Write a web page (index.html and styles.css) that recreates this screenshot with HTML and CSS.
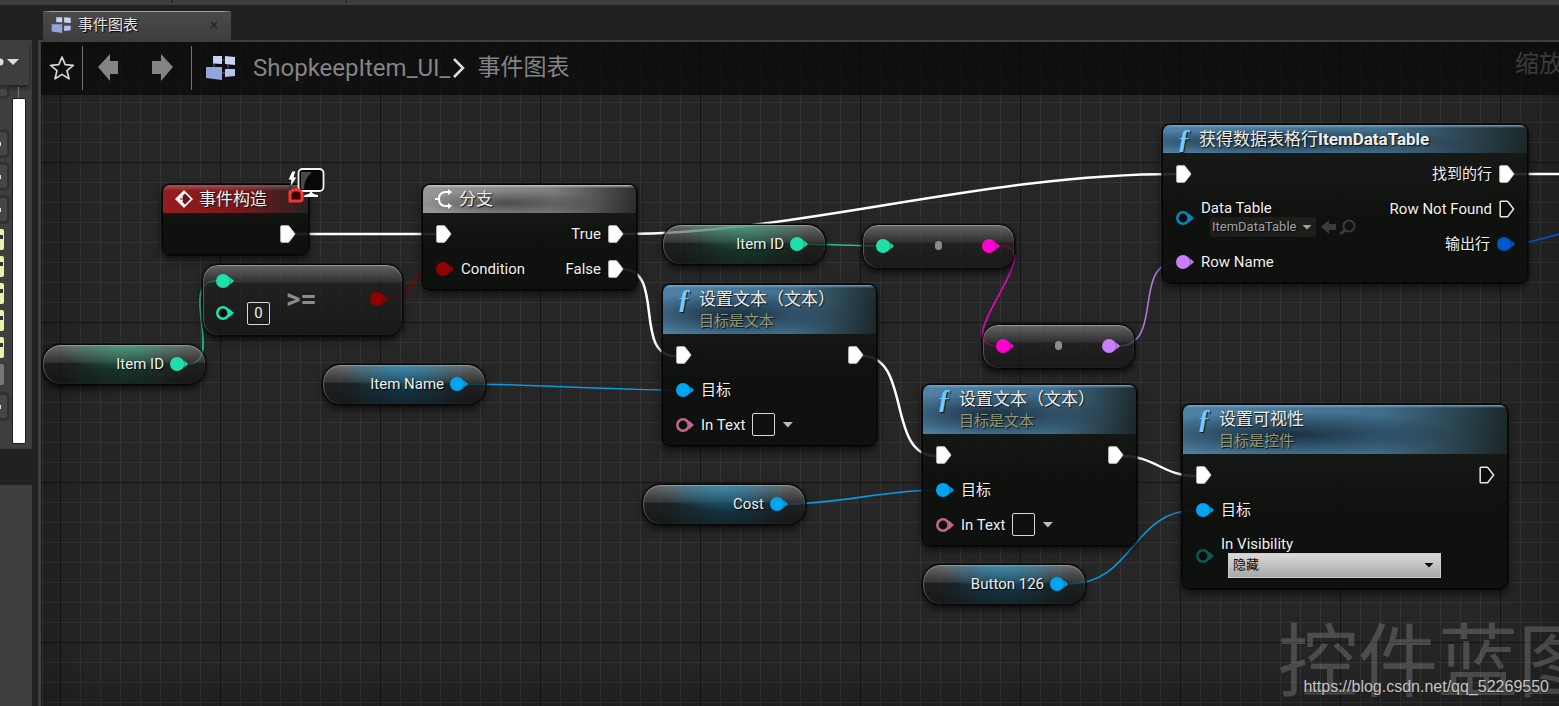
FILE: index.html
```html
<!DOCTYPE html>
<html lang="zh-CN">
<head>
<meta charset="utf-8">
<title>事件图表</title>
<link rel="stylesheet" href="styles.css">
</head>
<body>
<svg class="defs" aria-hidden="true">
  <symbol id="exec" viewBox="0 0 16 18"><path d="M.8 1.6Q.8.8 1.6.8H8Q8.800 .8 9.300 1.500L15 9L9.300 16.500Q8.800 17.200 8 17.200H1.600Q.8 17.200 .8 16.400Z" fill="#fff" stroke="#ddd" stroke-width="1"/></symbol>
  <symbol id="exec-open" viewBox="0 0 16 18"><path d="M1.200 2Q1.200 1.200 2 1.200H7.800Q8.500 1.200 9 1.800L14.600 9L9 16.200Q8.500 16.800 7.800 16.800H2Q1.200 16.800 1.200 16Z" fill="#0c0e0c" stroke="#e8e8e8" stroke-width="1.500"/></symbol>
  <symbol id="data" viewBox="0 0 18 14"><path d="M14.300 3.600L18 7L14.300 10.400Q15.800 7 14.300 3.600Z" fill="currentColor"/><path d="M12 2L17 7L12 12Z" fill="currentColor" opacity=".7"/><circle cx="7" cy="7" r="7" fill="currentColor"/></symbol>
  <symbol id="data-open" viewBox="0 0 18 14"><path d="M13 2.400L18 7L13 11.600Z" fill="currentColor"/><circle cx="7" cy="7" r="5.700" fill="#0a0d0b" stroke="currentColor" stroke-width="2.600"/></symbol>
  <symbol id="graph" viewBox="0 0 32 26">
    <path d="M9 8V16M23 8V16M14 5H23M14 18H22" stroke="#59617e" fill="none"/>
    <path d="M8 1H17V9L8 8.500ZM20 1L30 2V10L20 9Z" fill="#c9d2f3"/><path d="M1 12H17V25L1 23Z" fill="#94a5dc"/><path d="M20 14H30V21L20 22Z" fill="#b6c2ef"/>
  </symbol>
</svg>

<div class="topbar"><i></i><i></i></div>
<div class="shell">
  <aside class="side">
    <section class="details">
      <div class="details-head">
        <svg width="20" height="14" viewBox="0 0 20 14"><circle cx="0" cy="7" r="3.500" fill="#ddd"/><path d="M7 4H19L13 10Z" fill="#ddd"/></svg>
      </div>
      <div class="details-body">
        <div class="slots">
          <span class="slot cut"></span>
          <span class="slot dot first"></span><span class="slot dot"></span><span class="slot dot"></span>
          <span class="swatch"></span><span class="swatch"></span><span class="swatch"></span><span class="swatch"></span><span class="swatch"></span><span class="swatch off"></span>
          <span class="slot dot last"></span>
        </div>
        <div class="scroll"><div class="thumb"></div></div>
      </div>
    </section>
    <section class="lower"></section>
  </aside>

  <main class="editor">
    <div class="tabs">
      <div class="tab">
        <svg width="21" height="18"><use href="#graph"/></svg>
        <span>事件图表</span>
        <button class="close" aria-label="关闭"><svg width="8" height="8" viewBox="0 0 8 8"><path d="M1 1L7 7M7 1L1 7" stroke="#262626" stroke-width="1.500"/></svg></button>
      </div>
    </div>
    <div class="graph">
      <header class="crumbs">
        <button aria-label="收藏" class="star"><svg width="26" height="26" viewBox="0 0 26 26"><path d="M13 2L16.200 9.700L24.300 10.300L18 15.600L20 23.800L13 19.400L6 23.800L8 15.600L1.700 10.300L9.800 9.700Z" fill="none" stroke="#d6d6d6" stroke-width="1.700" stroke-linejoin="round"/></svg></button>
        <i class="rule"></i>
        <button aria-label="后退" class="nav"><svg width="22" height="30" viewBox="0 0 22 30"><path d="M0 14L12 1V8H20V21H12V28Z" fill="#848484"/></svg></button>
        <button aria-label="前进" class="nav"><svg width="22" height="30" viewBox="0 0 22 30"><path d="M22 14L10 1V8H1V21H10V28Z" fill="#848484"/></svg></button>
        <i class="rule"></i>
        <svg class="crumb-icon" width="32" height="26"><use href="#graph"/></svg>
        <a href="#">ShopkeepItem_UI_</a>
        <svg class="chevron" width="12" height="20" viewBox="0 0 12 20"><path d="M1 1L10 10L1 19" fill="none" stroke="#ddd" stroke-width="2.500"/></svg>
        <span class="here">事件图表</span>
        <span class="zoom">缩放-1</span>
      </header>

      <div class="canvas">
        <div class="watermark">控件蓝图</div>
        <svg class="wires" aria-hidden="true">
          <g transform="translate(-41 -42)" fill="none">
            <g stroke="#fff" stroke-width="2.500">
              <path d="M295 234H436"/><path d="M622 234C800 234 980 174 1176 174"/><path d="M622 269C666 269 632 356 676 356"/><path d="M862 356C912 356 886 456 936 456"/><path d="M1122 456C1155 456 1163 476 1196 476"/><path d="M1512 174H3000"/>
            </g>
            <g stroke="#1fc897" stroke-width="1.600"><path d="M187 364C226 364 177 281 216 281"/><path d="M805 244L876 246"/></g>
            <path d="M386 300C412 300 412 268 438 268" stroke="#8a0000" stroke-width="1.600"/>
            <path d="M1000 246C1052 246 944 346 998 346" stroke="#ee00bd" stroke-width="1.600"/>
            <path d="M1118 346C1166 346 1130 262 1178 262" stroke="#b873e8" stroke-width="1.600"/>
            <g stroke="#069be4" stroke-width="1.600"><path d="M467 384C530 384 610 390 676 390"/><path d="M787 504C840 504 885 490 936 490"/><path d="M1068 584C1135 584 1130 510 1197 510"/></g>
            <path d="M1512 243C1535 243 1545 237 1575 230" stroke="#0057cd" stroke-width="1.600"/>
          </g>
        </svg>

        <article class="node n-event">
          <h2 class="red"><svg width="20" height="20" viewBox="0 0 20 20"><path d="M10 1L19 10L10 19L1 10Z" fill="#f4f4f4"/><path d="M11 4.500L16.500 10L11 15.500L8.500 13L9 10.500H6V9.500H9L8.500 7Z" fill="#6b1414"/></svg>事件构造</h2>
          <div class="pins"><div></div><div class="outs"><div class="pin"><svg class="ex"><use href="#exec"/></svg></div></div></div>
          <svg class="badge" width="38" height="38" viewBox="0 0 38 38">
            <path d="M5 4H9L7 10H10L3 21L4 13H1Z" fill="#fff" stroke="#111" stroke-width=".8"/>
            <rect x="11.500" y="2" width="25" height="22" rx="4" fill="#080808" stroke="#f2f2f2" stroke-width="1.800"/>
            <path d="M14 5H25Q17 12 17 22H14Z" fill="#484848"/><path d="M18 28Q23 27 23 25H25Q25 27 31 28V30H16Z" fill="#fff"/>
            <path d="M4 25L6 23H12L15 26V33L14 34H3V25Z" fill="#310000" stroke="#f83535" stroke-width="3"/>
          </svg>
        </article>

        <article class="node n-branch">
          <h2 class="gray"><svg width="20" height="20" viewBox="0 0 20 20"><path d="M1 10H5M16 3H12Q5 3 5 10Q5 17 12 17H16" fill="none" stroke="#fff" stroke-width="2"/><path d="M14 0L18 3L14 6ZM14 14L18 17L14 20Z" fill="#fff"/></svg>分支</h2>
          <div class="pins">
            <div class="ins"><div class="pin"><svg class="ex"><use href="#exec"/></svg></div><div class="pin"><svg class="dp bool"><use href="#data"/></svg>Condition</div></div>
            <div class="outs"><div class="pin">True<svg class="ex"><use href="#exec"/></svg></div><div class="pin">False<svg class="ex"><use href="#exec"/></svg></div></div>
          </div>
        </article>

        <article class="node n-text1">
          <h2 class="blue tall"><b class="fn">ƒ</b><span>设置文本（文本）<small>目标是文本</small></span></h2>
          <div class="pins">
            <div class="ins"><div class="pin"><svg class="ex"><use href="#exec"/></svg></div><div class="pin"><svg class="dp obj"><use href="#data"/></svg>目标</div><div class="pin"><svg class="dp text"><use href="#data-open"/></svg><label for="text1">In Text</label><input id="text1" class="box"><i class="caret"></i></div></div>
            <div class="outs"><div class="pin"><svg class="ex"><use href="#exec"/></svg></div></div>
          </div>
        </article>

        <article class="node n-text2">
          <h2 class="blue tall"><b class="fn">ƒ</b><span>设置文本（文本）<small>目标是文本</small></span></h2>
          <div class="pins">
            <div class="ins"><div class="pin"><svg class="ex"><use href="#exec"/></svg></div><div class="pin"><svg class="dp obj"><use href="#data"/></svg>目标</div><div class="pin"><svg class="dp text"><use href="#data-open"/></svg><label for="text2">In Text</label><input id="text2" class="box"><i class="caret"></i></div></div>
            <div class="outs"><div class="pin"><svg class="ex"><use href="#exec"/></svg></div></div>
          </div>
        </article>

        <article class="node n-row">
          <h2 class="blue"><b class="fn">ƒ</b><span>获得数据表格行<b>ItemDataTable</b></span></h2>
          <div class="pins">
            <div class="ins">
              <div class="pin"><svg class="ex"><use href="#exec"/></svg></div>
              <div class="pin stacked"><svg class="dp obj2"><use href="#data-open"/></svg>
                <div class="field"><label for="table">Data Table</label>
                  <div class="asset"><span class="pick dark"><select id="table"><option>ItemDataTable</option></select></span>
                    <svg width="36" height="16" viewBox="0 0 36 16"><path d="M0 8L8 1V5H15V11H8V15Z" fill="#3c3c3c"/><circle cx="28" cy="7" r="5.500" fill="none" stroke="#3c3c3c" stroke-width="2"/><path d="M24 11L19.500 15" stroke="#3c3c3c" stroke-width="3"/></svg>
                  </div></div></div>
              <div class="pin"><svg class="dp name"><use href="#data"/></svg>Row Name</div>
            </div>
            <div class="outs"><div class="pin">找到的行<svg class="ex"><use href="#exec"/></svg></div><div class="pin">Row Not Found<svg class="ex"><use href="#exec-open"/></svg></div><div class="pin">输出行<svg class="dp struct"><use href="#data"/></svg></div></div>
          </div>
        </article>

        <article class="node n-vis">
          <h2 class="blue tall"><b class="fn">ƒ</b><span>设置可视性<small>目标是控件</small></span></h2>
          <div class="pins">
            <div class="ins">
              <div class="pin"><svg class="ex"><use href="#exec"/></svg></div><div class="pin"><svg class="dp obj"><use href="#data"/></svg>目标</div>
              <div class="pin stacked vis"><svg class="dp enum"><use href="#data-open"/></svg>
                <div class="field"><label for="vis">In Visibility</label><span class="pick light"><select id="vis"><option>隐藏</option></select></span></div></div>
            </div>
            <div class="outs"><div class="pin"><svg class="ex"><use href="#exec-open"/></svg></div></div>
          </div>
        </article>

        <div class="var int v-id1">Item ID<svg class="dp"><use href="#data"/></svg></div>
        <div class="var ref v-name">Item Name<svg class="dp"><use href="#data"/></svg></div>
        <div class="var int v-id2">Item ID<svg class="dp"><use href="#data"/></svg></div>
        <div class="var ref v-cost">Cost<svg class="dp"><use href="#data"/></svg></div>
        <div class="var ref v-button">Button 126<svg class="dp"><use href="#data"/></svg></div>

        <div class="compact c-int"><svg class="dp integer"><use href="#data"/></svg><i class="bullet"></i><svg class="dp string"><use href="#data"/></svg></div>
        <div class="compact c-name"><svg class="dp string"><use href="#data"/></svg><i class="bullet"></i><svg class="dp name"><use href="#data"/></svg></div>
        <div class="compact c-ge">
          <div class="operands"><svg class="dp integer"><use href="#data"/></svg><div class="operand"><svg class="dp integer"><use href="#data-open"/></svg><input class="box" value="0" aria-label="B"></div></div>
          <b class="op">&gt;=</b><svg class="dp bool"><use href="#data"/></svg>
        </div>
        <div class="credit">https://blog.csdn.net/qq_52269550</div>
      </div>
    </div>
  </main>
</div>
</body>
</html>
```
FILE: styles.css
```css
* { box-sizing: border-box; }
body {
  margin: 0;
  height: 100vh;
  display: flex;
  flex-direction: column;
  overflow: hidden;
  background: #212121;
  color: #f0f0f0;
  font: 15px/18px Roboto, "Noto Sans CJK SC", sans-serif;
}
button { padding: 0; border: 0; background: none; display: flex; }
svg { flex: none; display: block; }
.defs { position: absolute; width: 0; height: 0; }

/* shell */
.topbar { height: 5px; flex: none; background: #3e3e3e; display: flex; gap: 172px; padding-left: 171px; }
.topbar i { width: 2px; height: 3px; background: #2a2a2a; }
.shell { flex: 1; min-height: 0; display: grid; grid-template-columns: 32px minmax(0, 1fr); gap: 6px; }
.side { display: flex; flex-direction: column; gap: 36px; padding-top: 35px; overflow: hidden; }
.details, .lower { background: #3e3e3e; }
.lower { flex: 1; }
.details-head { height: 45px; padding-top: 15px; margin-right: 3px; box-shadow: 0 3px 4px #222; }
.details-body { display: flex; justify-content: space-between; padding: 2px 6px 5px 0; }
.slots { display: flex; flex-direction: column; gap: 6px; width: 9px; }
.slot { height: 27px; background: #464646; border: 2px solid #303030; border-left: 0; border-radius: 0 4px 4px 0; box-shadow: 0 0 0 1px #363636; display: flex; align-items: center; }
.slot.cut { height: 11px; }
.slot.first { margin-top: 26px; }
.slot.last { margin-top: 2px; }
.slot.dot::before { content: ""; width: 1px; height: 4px; background: #ddd; }
.swatch { width: 4px; height: 21px; background: linear-gradient(#333, #333) 0 6px / 3px 4px no-repeat #eeeeae; border-radius: 0 2px 2px 0; }
.swatch.off { background: #777; }
.scroll { padding-top: 11px; width: 14px; background: linear-gradient(#777, #777) 6px 0 / 1px 11px no-repeat; }
.thumb { height: 346px; background: #fff; border: 1px solid #1c1c1c; border-radius: 2px; }

.editor { display: flex; flex-direction: column; min-width: 0; }
.tabs { height: 35px; flex: none; padding: 6px 5px 0; display: flex; }
.tab { width: 188px; display: flex; align-items: center; gap: 6px; padding: 0 13px 2px 8px; background: linear-gradient(90deg, transparent, #c5a52b 8px, #c5a52b 180px, transparent) 0 0 / 100% 1px no-repeat, linear-gradient(#4a4a4a, #3e3e3e); color: #e6e6e6; text-shadow: 1px 1px 1px #000; }
.close { margin-left: auto; }

/* graph */
.graph { flex: 1; min-height: 0; border-left: 3px solid #3e3e3e; border-top: 2px solid #3e3e3e; position: relative; overflow: hidden; background: #262626; }
.crumbs { position: absolute; inset: 0 0 auto; z-index: 2; height: 53px; display: flex; align-items: center; padding: 0 0 2px 8px; background: rgba(8, 8, 8, .72); color: #848484; font-size: 24px; line-height: 30px; white-space: nowrap; }
.crumbs a { color: inherit; text-decoration: none; margin-left: 16px; }
.crumbs .rule { width: 1px; height: 44px; background: #707070; }
.star { margin-right: 7px; }
.nav { margin-left: 15px; }
.nav + .nav { margin: 0 18px 0 31px; }
.crumb-icon { margin-left: 13px; }
.chevron { margin: 0 12px 0 3px; }
.here { font-size: 23px; }
.zoom { position: absolute; left: 1474px; top: 7px; color: #3c3c3c; }
.canvas {
  position: absolute;
  inset: 0;
  background:
    repeating-linear-gradient(90deg, #151515 0 1px, transparent 1px 160px) 19px 0,
    repeating-linear-gradient(#151515 0 1px, transparent 1px 160px) 0 -40px / 100% 960px,
    repeating-linear-gradient(90deg, #343434 0 1px, transparent 1px 20px) 19px 0,
    repeating-linear-gradient(#343434 0 1px, transparent 1px 20px);
}
.canvas::before { content: ""; position: absolute; inset: 0; box-shadow: inset 0 0 70px rgba(0, 0, 0, .35); }
.wires { position: absolute; inset: 0; width: 100%; height: 100%; }
.watermark { position: absolute; left: 1237px; top: 573px; font-size: 80px; line-height: 96px; white-space: nowrap; color: rgba(255, 255, 255, .18); }
.credit { position: absolute; right: 10px; bottom: 9px; font: 16px/20px "Liberation Sans", sans-serif; color: #c4c4c4; text-shadow: 0 1px 1px #222; }

/* nodes */
.node { position: absolute; border: 1px solid #050505; border-radius: 8px; background: linear-gradient(rgba(24, 27, 24, .86), rgba(12, 15, 12, .92) 60%); box-shadow: 0 0 0 1px rgba(0, 0, 0, .5), 0 4px 8px rgba(0, 0, 0, .65); }
.node h2 { margin: 0; height: 28px; display: flex; align-items: center; gap: 5px; padding-left: 11px; border-radius: 7px 7px 0 0; font-size: 17px; font-weight: 400; line-height: 22px; color: #eee; text-shadow: 1px 1px 1px #111; white-space: nowrap; }
.node h2.tall { height: 49px; align-items: flex-start; padding-top: 3px; }
.node h2 b { font-weight: 700; }
.node small { display: block; font-size: 15px; color: #929875; }
.node h2 .fn { width: 20px; font: italic 700 27px/22px "Liberation Serif", serif; color: #79c8ff; text-align: center; }
.red { background: linear-gradient(rgba(255, 255, 255, .25), transparent 6px), linear-gradient(90deg, #951b1e, #7e171a 50%, #242323); }
.gray { background: linear-gradient(#c8c2c2, transparent 3px), radial-gradient(ellipse at 40% 65%, rgba(30, 30, 30, .55), transparent 50%), linear-gradient(100deg, #989898, #7d7d7d 60%, #2a2c2a); }
.blue { background: linear-gradient(#70a9d4, transparent 3px), radial-gradient(ellipse at 32% 60%, rgba(18, 35, 50, .85), transparent 55%), linear-gradient(100deg, #4f83a6, #416e8b 60%, #1b2627); }
.pins { display: flex; justify-content: space-between; padding: 3px 12px 3px 13px; }
.pin { height: 35px; display: flex; align-items: center; gap: 7px; white-space: nowrap; text-shadow: 1px 1px 1px #000; }
.outs .pin { justify-content: flex-end; }
.pin.stacked { height: 53px; }
.pin.vis { height: 58px; }
.ex { width: 16px; height: 18px; }
.dp { width: 18px; height: 14px; }
.field { display: flex; flex-direction: column; }
.asset { display: flex; align-items: center; gap: 5px; padding-left: 9px; }
.pick { position: relative; display: flex; }
.pick select { appearance: none; width: 100%; border: 0; border-radius: 3px; padding: 0 2px; font: inherit; color: inherit; background: none; text-shadow: inherit; }
.pick::after { content: ""; position: absolute; right: 4px; top: 8px; width: 10px; height: 5px; background: currentColor; clip-path: polygon(0 0, 100% 0, 50% 100%); pointer-events: none; }
.pick.dark { width: 106px; height: 20px; background: #1c1e1c; border-radius: 3px; color: #a2a2a2; font-size: 13px; }
.pick.light { width: 213px; height: 25px; margin-left: 7px; background: linear-gradient(#dadada, #a8a8a8); border: 1px solid #ccc; color: #080808; text-shadow: none; font-size: 13px; }
.pick.light select { padding: 0 4px; }
.pick.light::after { right: 6px; top: 9px; }
.box { width: 23px; height: 23px; padding: 0; border: 1px solid #d8d8d8; border-radius: 2px; background: transparent; color: #eee; font: inherit; text-align: center; }
.caret { width: 11px; height: 6px; background: #bbb; clip-path: polygon(0 0, 100% 0, 50% 100%); }
.badge { position: absolute; right: -17px; top: -18px; }

.bool { color: #920000; }
.obj { color: #00a4f2; }
.obj2 { color: #0784bd; }
.text { color: #c5658f; }
.name { color: #c77eff; }
.struct { color: #0057cd; }
.enum { color: #075b50; }
.integer { color: #1fe0aa; }
.string { color: #ff00cf; }

.var, .compact { position: absolute; display: flex; align-items: center; border: 1px solid #080808; box-shadow: inset 0 1px 1px #999, inset 1px 0 1px #555, 0 0 0 1px rgba(0, 0, 0, .4), 0 4px 7px rgba(0, 0, 0, .65); }
.var { width: 164px; height: 41px; border-radius: 19px; justify-content: flex-end; gap: 6px; padding: 0 17px 2px 0; text-shadow: 1px 1px 1px #000; }
.int { background: radial-gradient(70px 26px at 50% 0, rgba(70, 190, 145, .6), transparent), radial-gradient(65px 30px at 50% 60%, rgba(18, 70, 52, .6), transparent), linear-gradient(rgba(125, 125, 125, .75), rgba(60, 62, 61, .65) 17px, rgba(26, 28, 27, .65) 18px, rgba(18, 20, 19, .8)); }
.ref { background: radial-gradient(70px 26px at 50% 0, rgba(50, 165, 215, .65), transparent), radial-gradient(65px 30px at 50% 60%, rgba(12, 66, 90, .65), transparent), linear-gradient(rgba(125, 125, 125, .75), rgba(60, 62, 63, .65) 17px, rgba(26, 28, 29, .65) 18px, rgba(18, 20, 21, .8)); }
.int .dp { color: #1fe0aa; }
.ref .dp { color: #00a4f2; }
.compact { width: 153px; height: 45px; border-radius: 16px; justify-content: space-between; padding: 0 14px 2px 13px; background: linear-gradient(rgba(120, 120, 120, .75), rgba(52, 52, 52, .7) 17px, rgba(30, 30, 30, .7) 18px, rgba(22, 22, 22, .8)); }
.bullet { width: 7px; height: 9px; border-radius: 4px; background: #8c8c8c; }
.operands { display: flex; flex-direction: column; gap: 14px; }
.operand { display: flex; gap: 13px; height: 23px; align-items: center; }
.op { margin: 0 auto 0 16px; font-size: 28px; line-height: 30px; color: #8c8c8c; }

/* node placement on the canvas */
.n-event { left: 121px; top: 142px; width: 147px; }
.n-branch { left: 381px; top: 142px; width: 215px; }
.n-text1 { left: 621px; top: 242px; width: 215px; }
.n-text2 { left: 881px; top: 342px; width: 215px; }
.n-row { left: 1121px; top: 82px; width: 366px; }
.n-vis { left: 1141px; top: 362px; width: 326px; }
.v-id1 { left: 1px; top: 302px; }
.v-name { left: 281px; top: 322px; }
.v-id2 { left: 621px; top: 182px; }
.v-cost { left: 601px; top: 442px; }
.v-button { left: 881px; top: 522px; }
.c-int { left: 821px; top: 182px; }
.c-name { left: 941px; top: 282px; }
.c-ge { left: 161px; top: 222px; width: 201px; height: 72px; }
```
